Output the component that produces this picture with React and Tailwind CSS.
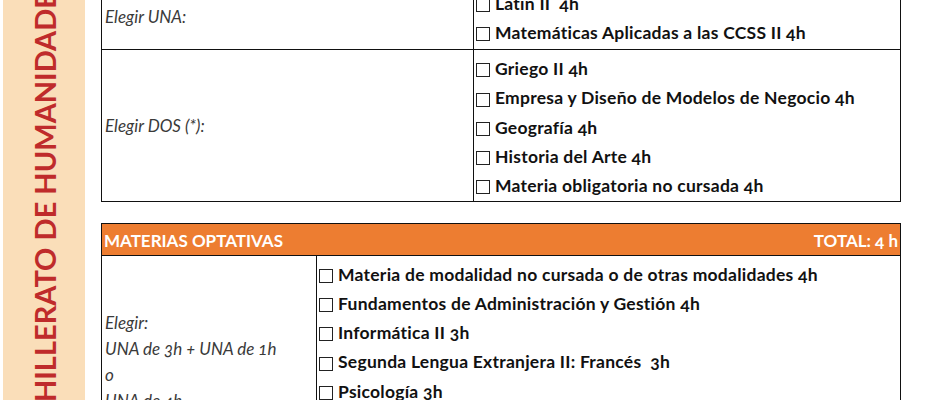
const Item = ({ children }) => (
  <div className="flex items-center h-[29.3px] whitespace-nowrap">
    <span className="inline-block w-[14px] h-[14px] border-[1.5px] border-[#222] mr-[5px] mt-[2px] shrink-0" />
    <span>{children}</span>
  </div>
);

const Label = ({ children }) => (
  <div className="italic text-[#3a3a3a] font-normal tracking-normal">{children}</div>
);

export default function App() {
  return (
    <div className="h-[400px] w-[940px] overflow-hidden bg-white flex font-['Lato',sans-serif] text-[17px] text-[#111] oldstyle-nums">
      {/* side band */}
      <div className="ml-[3px] w-[82px] h-[400px] bg-[#FADEB9] flex flex-col justify-end items-center overflow-hidden shrink-0">
        <span className="[writing-mode:vertical-rl] rotate-180 text-[29px] font-bold text-[#BF2B2B] whitespace-nowrap -mb-[60px] leading-none">
          BACHILLERATO DE HUMANIDADES Y CIENCIAS SOCIALES
        </span>
      </div>

      <div className="ml-[16px] w-[800px] -mt-[17px] flex flex-col shrink-0">
        {/* materias de modalidad */}
        <div className="border-[1.5px] border-[#111] grid grid-cols-[372px_1fr]">
          <div className="border-r-[1.5px] border-b-[1.5px] border-[#111] flex items-center pl-[3px]">
            <Label>Elegir UNA:</Label>
          </div>
          <div className="border-b-[1.5px] border-[#111] pl-[2px] pt-[5px] pb-[1px] font-bold text-[17.5px] tracking-[0.25px]">
            <Item>Latín II&nbsp; 4h</Item>
            <Item>Matemáticas Aplicadas a las CCSS II 4h</Item>
          </div>
          <div className="border-r-[1.5px] border-[#111] flex items-center pl-[3px]">
            <Label>Elegir DOS (*):</Label>
          </div>
          <div className="pl-[2px] pt-[5px] font-bold text-[17.5px] tracking-[0.25px]">
            <Item>Griego II 4h</Item>
            <Item>Empresa y Diseño de Modelos de Negocio 4h</Item>
            <Item>Geografía 4h</Item>
            <Item>Historia del Arte 4h</Item>
            <Item>Materia obligatoria no cursada 4h</Item>
          </div>
        </div>

        {/* optativas */}
        <div className="mt-[21px] border-[1.5px] border-[#111]">
          <div className="bg-[#ED7D31] text-white font-bold flex justify-between items-center h-[32px] px-[2px] pt-[2px] border-b-[1.5px] border-[#111]">
            <span>MATERIAS OPTATIVAS</span>
            <span>TOTAL: 4 h</span>
          </div>
          <div className="grid grid-cols-[215px_1fr]">
            <div className="border-r-[1.5px] border-[#111] pl-[3px] pt-[54px] leading-[26px]">
              <Label>Elegir:</Label>
              <Label>UNA de 3h + UNA de 1h</Label>
              <Label>o</Label>
              <Label>UNA de 4h</Label>
            </div>
            <div className="pl-[2px] pt-[4px] font-bold text-[17.5px] tracking-[0.25px]">
              <Item>Materia de modalidad no cursada o de otras modalidades 4h</Item>
              <Item>Fundamentos de Administración y Gestión 4h</Item>
              <Item>Informática II 3h</Item>
              <Item>Segunda Lengua Extranjera II: Francés&nbsp; 3h</Item>
              <Item>Psicología 3h</Item>
              <Item>Tecnología e Ingeniería II 3h</Item>
            </div>
          </div>
        </div>
      </div>
    </div>
  );
}
